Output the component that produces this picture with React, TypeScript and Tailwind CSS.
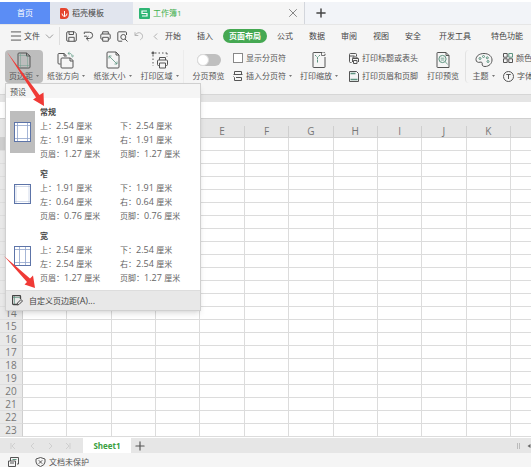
import React, { useState } from 'react';
import { ChevronDown, ChevronLeft, Menu, Plus, X } from 'lucide-react';

type Preset = {
  name: string;
  kind: 'normal' | 'narrow' | 'wide';
  top: string;
  bottom: string;
  left: string;
  right: string;
  header: string;
  footer: string;
};

const presets: Preset[] = [
  { name: '常规', kind: 'normal', top: '2.54', bottom: '2.54', left: '1.91', right: '1.91', header: '1.27', footer: '1.27' },
  { name: '窄', kind: 'narrow', top: '1.91', bottom: '1.91', left: '0.64', right: '0.64', header: '0.76', footer: '0.76' },
  { name: '宽', kind: 'wide', top: '2.54', bottom: '2.54', left: '2.54', right: '2.54', header: '1.27', footer: '1.27' },
];

const menuTabs = ['开始', '插入', '页面布局', '公式', '数据', '审阅', '视图', '安全', '开发工具', '特色功能'];
const columns = ['A', 'B', 'C', 'D', 'E', 'F', 'G', 'H', 'I', 'J', 'K'];
const rows = Array.from({ length: 23 }, (_, i) => i + 1);

function Svg({ className, box, children }: { className: string; box: string; children: React.ReactNode }) {
  return (
    <svg className={`shrink-0 ${className}`} viewBox={box} fill="none" stroke="currentColor" strokeWidth="1" aria-hidden="true">
      {children}
    </svg>
  );
}

function SaveIcon() {
  return (
    <Svg className="h-[11px] w-[11px]" box="0 0 11 11">
      <path d="M2 .7h6.3l2 2V9q0 1.3-1.3 1.3H2Q.7 10.3.7 9V2Q.7.7 2 .7z" />
      <path d="M3 .8v2.700h4.500V.8M2.800 10.200V6.300h5.400v3.900" />
    </Svg>
  );
}

function ExportIcon() {
  return (
    <Svg className="h-[11px] w-[11px]" box="0 0 11 11">
      <path d="M1.300 3V1.200h5.200a3 3 0 0 1 0 6.300H3.500" />
      <path d="M5.500 5.300 3.200 7.500l2.300 2.300M1 5.200h3" />
    </Svg>
  );
}

function PrinterIcon() {
  return (
    <Svg className="h-[11px] w-[11px]" box="0 0 11 11">
      <path d="M2.700 3V.8h5.600V3M2.700 8.200H1.800Q.8 8.200.8 7.200V4q0-1 1-1h7.400q1 0 1 1v3.200q0 1-1 1h-.9" />
      <path d="M2.700 6.300h5.600v3.900H2.700z" />
    </Svg>
  );
}

function PreviewIcon() {
  return (
    <Svg className="h-[11px] w-[11px]" box="0 0 11 11">
      <path d="M9.500 4V1.800q0-1-1-1H1.800q-1 0-1 1v7.400q0 1 1 1h3.400" />
      <circle cx="6.300" cy="6" r="2.500" />
      <path d="m8 8 2.500 2.500" />
    </Svg>
  );
}

function UndoIcon() {
  return (
    <Svg className="h-[10px] w-[10px] text-[#b5b5b5]" box="0 0 10 10">
      <path d="M1 1.200v3.300h3.300M1.200 4.300C2.500 1.800 5 1 7 2.300c2.300 1.700 2 5-.7 6.500" />
    </Svg>
  );
}

function MarginIcon() {
  return (
    <Svg className="h-[17px] w-[14px]" box="0 0 14 17">
      <path d="M2 1h7.500L13 4v11q0 1-1 1H2q-1 0-1-1V2q0-1 1-1z" />
      <path d="M9.500 1v3H13" />
      <path d="M3.500 1v15M10.500 4v12M1 3.500h8.500M1 13.500h12" stroke="#6f9f8c" strokeWidth=".5" />
    </Svg>
  );
}

function OrientationIcon() {
  return (
    <Svg className="h-[18px] w-[18px]" box="0 0 18 18">
      <path d="M3.500 13H2q-1 0-1-1V3.500q0-1 1-1h5l2.500 2.300M7 2.500V5h2.500" />
      <path d="M5 7h8.500L16 9.500V16q0 1-1 1H5q-1 0-1-1V8q0-1 1-1zM13 7v3h3" />
      <path d="M11 2.500q4-.8 4.500 3M12.500.800 11 2.500l1.700 1.400M14 4.500l1.500 1.400L17 4.500" stroke="#6fa390" strokeWidth=".8" />
    </Svg>
  );
}

function SizeIcon() {
  return (
    <Svg className="h-[18px] w-[14px]" box="0 0 14 18">
      <path d="M2 1h8l3 3v12q0 1-1 1H2q-1 0-1-1V2q0-1 1-1z" />
      <path d="M10 1v3h3" />
      <path d="m3 5 8 8M3 7.500V5h2.500M11 10.500V13H8.500" stroke="#5d9480" strokeWidth=".8" />
    </Svg>
  );
}

function AreaIcon() {
  return (
    <Svg className="h-[18px] w-[18px]" box="0 0 18 18">
      <path d="M2 4v11M4 2h12M16 2v4" strokeDasharray="1.500 2" />
      <path d="M.500 2h3M2 .500v3" strokeWidth="1.500" />
      <path d="M8.500 9V6.500h6V9M8.500 14.500h-1q-1 0-1-1V10q0-1 1-1h8q1 0 1 1v3.500q0 1-1 1h-1" />
      <path d="M8.500 12h6v5h-6z" />
    </Svg>
  );
}

function ScaleIcon() {
  return (
    <Svg className="h-[18px] w-[14px]" box="0 0 14 18">
      <path d="M9 1.500H1.500Q1 1.500 1 2v14q0 .5.500.500h11q.5 0 .5-.5V6" />
      <path d="M9 1.500h3.500q.5 0 .5.500v2.500" strokeDasharray="1.500 1" />
      <path d="M3 4 5.500 6.500 8 4M5.500 6.500V12" stroke="#5d9480" strokeDasharray="2 .5" />
      <path d="M9.500 1.500v3H13" strokeWidth=".8" />
    </Svg>
  );
}

function BigPreviewIcon() {
  return (
    <Svg className="h-[18px] w-[14px]" box="0 0 14 18">
      <path d="M1.500 1.500H10l3 3v12H1.500Q1 16.500 1 16V2q0-.5.500-.500z" />
      <path d="M10 1.500v3h3" />
      <circle cx="6.500" cy="8" r="3.600" stroke="#5d9480" />
      <path d="m9.200 10.700 2.500 2.800M4.700 7.200h3.600M4.700 9h3.600" stroke="#5d9480" strokeWidth=".8" />
    </Svg>
  );
}

function PaletteIcon() {
  return (
    <Svg className="h-[16px] w-[18px]" box="0 0 18 16">
      <path d="M9 1.500C4 1.500 1 4.300 1 7.500c0 2.500 2 3.300 4 2.700 1.700-.5 2.500.5 2.200 1.800-.3 1.500.8 2.500 2.800 2.500 4 0 7-3 7-6.500s-3-6.500-8-6.500z" />
      <circle cx="5" cy="6.500" r="1" stroke="#5d9480" />
      <circle cx="8.500" cy="4.500" r="1" stroke="#5d9480" />
      <circle cx="12.300" cy="5.800" r="1" stroke="#5d9480" />
      <circle cx="13" cy="9.500" r="1" stroke="#5d9480" />
    </Svg>
  );
}

function BreakIcon() {
  return (
    <Svg className="h-[10px] w-[10px]" box="0 0 10 10">
      <path d="M1.500 3.500v-3h7v3M.500 3.500h9M1.500 9.500h7v-3H3M1.500 9.500v-3L.500 5.500" />
    </Svg>
  );
}

function TitlePrintIcon() {
  return (
    <Svg className="h-[11px] w-[10px]" box="0 0 10 11">
      <path d="M2.500 9.500h-1q-1 0-1-1v-7q0-1 1-1h5q1 0 1 1V3M.500 3h5" />
      <path d="M4 5.500V4h4v1.500M3.500 9V5.500h6V9M4.500 7.500h3.500v3H4.500z" />
    </Svg>
  );
}

function HeaderFooterIcon() {
  return (
    <Svg className="h-[11px] w-[10px]" box="0 0 10 11">
      <path d="M.500.500h7l2 2v8h-9z" />
      <path d="M1.500 2.500h5M1.500 8.500h7" stroke="#5d9480" strokeWidth="1.500" />
    </Svg>
  );
}

function ColorIcon() {
  return (
    <Svg className="h-[10px] w-[10px]" box="0 0 10 10">
      <path d="M.500.500h3.700v3.700H.500zM.500 5.800h3.700v3.700H.500zM5.800 5.800h3.700v3.700H5.800z" />
      <path d="M5.800.500h3.700v3.700H5.800z" stroke="#5d9480" />
    </Svg>
  );
}

function FontIcon() {
  return (
    <Svg className="h-[11px] w-[11px]" box="0 0 11 11">
      <circle cx="5.500" cy="5.500" r="5" />
      <path d="M3.300 3.500h4.400M5.500 3.500v4.500" />
    </Svg>
  );
}

function PageThumb({ kind }: { kind: Preset['kind'] }) {
  return (
    <svg className="h-[20px] w-[17px]" viewBox="0 0 17 20" fill="none" stroke="#8fa3cb" aria-hidden="true">
      <rect x=".5" y=".5" width="16" height="19" fill="#fff" stroke="#5d74a8" />
      {kind === 'normal' && <path d="M3.500 1v18M13.500 1v18M1 3.500h15M1 16.500h15" strokeWidth=".8" />}
      {kind === 'narrow' && <path d="M2 1v18M15 1v18M1 2.500h15M1 17.500h15" strokeWidth=".4" />}
      {kind === 'wide' && <path d="M5.500 1v18M11.500 1v18M1 3.500h15M1 16.500h15" strokeWidth=".8" />}
    </svg>
  );
}

function Caret() {
  return (
    <svg className="h-[2px] w-[3px] shrink-0" viewBox="0 0 3 2" fill="#777" aria-hidden="true">
      <path d="M0 0h3L1.500 2z" />
    </svg>
  );
}

function BigButton({ icon, label, caret, className }: { icon: React.ReactNode; label: string; caret?: boolean; className: string }) {
  return (
    <button className={`flex h-[33px] shrink-0 flex-col items-center gap-[2px] rounded-sm pt-px ${className}`}>
      <span className="flex h-[18px] items-center">{icon}</span>
      <span className="flex items-center gap-[3px] whitespace-nowrap leading-[10px]">
        {label}
        {caret && <Caret />}
      </span>
    </button>
  );
}

function SmallButton({ icon, label, caret }: { icon: React.ReactNode; label: string; caret?: boolean }) {
  return (
    <button className="flex h-[12px] items-center gap-[3px] whitespace-nowrap">
      {icon}
      {label}
      {caret && <Caret />}
    </button>
  );
}

function TitleTabs() {
  return (
    <div className="flex h-[24px] shrink-0 border-t-2 border-white bg-[#f2f4f8]">
      <button className="w-[50px] shrink-0 bg-[#5b8df5] text-white">首页</button>
      <button className="flex w-[83px] shrink-0 items-center gap-[3px] bg-[#e1e5ee] pl-[10px] text-[#444]">
        <svg className="h-[11px] w-[9px]" viewBox="0 0 9 11" aria-hidden="true">
          <path d="M1 0h3.500Q9 0 9 5.500T4.500 11H1q-1 0-1-1V1q0-1 1-1z" fill="#e5452f" />
          <path d="M4.500 8.500V3M4.500 8.500Q2 8 2 5.500M4.500 8.500Q7 8 7 5.500" stroke="#fff" fill="none" />
        </svg>
        稻壳模板
      </button>
      <div className="flex w-[172px] shrink-0 items-center border-r border-[#d3d6dc] bg-[#f5f5f5] pl-[6px] pr-[4px]">
        <button className="flex flex-1 items-center gap-[3px] text-[#3fae4d]">
          <svg className="h-[11px] w-[11px]" viewBox="0 0 11 11" aria-hidden="true">
            <rect width="11" height="11" rx="1" fill="#2fb574" />
            <path d="M8 3H3v2.500h5V8H3" stroke="#fff" strokeWidth="1.200" fill="none" />
          </svg>
          工作簿1
        </button>
        <button aria-label="关闭" className="text-[#777]"><X size={14} strokeWidth={1.500} /></button>
      </div>
      <button aria-label="新建" className="pl-[9px] text-[#444]"><Plus size={14} strokeWidth={2.500} /></button>
    </div>
  );
}

function MenuBar({ active, onSelect }: { active: string; onSelect: (tab: string) => void }) {
  return (
    <nav className="flex h-[23px] shrink-0 items-center overflow-hidden border-t border-[#e6e6e6] pl-[9px]">
      <button className="flex h-[18px] w-[51px] shrink-0 items-center gap-px border-r border-[#ddd]">
        <Menu size={14} strokeWidth={1.500} />
        文件
        <ChevronDown size={13} strokeWidth={1.500} className="ml-[2px] text-[#888]" />
      </button>
      <div className="flex w-[105px] shrink-0 items-center gap-[6px] pl-[6px] text-[#555]">
        <button aria-label="保存"><SaveIcon /></button>
        <button aria-label="输出"><ExportIcon /></button>
        <button aria-label="打印"><PrinterIcon /></button>
        <button aria-label="打印预览"><PreviewIcon /></button>
        <button aria-label="撤销"><UndoIcon /></button>
        <button aria-label="更多" className="text-[#aaa]"><ChevronLeft size={11} strokeWidth={2} /></button>
      </div>
      <div className="flex shrink-0 items-center gap-[16px]">
        {menuTabs.map(tab => (
          <button
            key={tab}
            onClick={() => onSelect(tab)}
            className={`whitespace-nowrap ${
              tab === active
                ? '-mx-[6px] h-[14px] rounded-full bg-[#45a852] px-[6px] font-bold text-white'
                : tab.length > 2 ? 'mx-[2px]' : ''
            }`}
          >
            {tab}
          </button>
        ))}
      </div>
    </nav>
  );
}

function Ribbon() {
  const [paging, setPaging] = useState(false);

  return (
    <div className="flex h-[47px] shrink-0 items-start overflow-hidden pl-[5px] pt-[3px] text-[#555]">
      <BigButton className="w-[38px] bg-[#bdbdbd]" icon={<MarginIcon />} label="页边距" caret />
      <BigButton className="w-[46px]" icon={<OrientationIcon />} label="纸张方向" caret />
      <BigButton className="w-[47px]" icon={<SizeIcon />} label="纸张大小" caret />
      <BigButton className="w-[47px]" icon={<AreaIcon />} label="打印区域" caret />
      <button
        role="switch"
        aria-checked={paging}
        onClick={() => setPaging(!paging)}
        className="flex h-[33px] w-[50px] shrink-0 flex-col items-center gap-[2px] border-l border-[#ececec] pt-px"
      >
        <span className="flex h-[18px] items-center">
          <span className={`flex h-[12px] w-[24px] items-center rounded-full ${paging ? 'justify-end bg-[#45a852]' : 'bg-[#bfbfbf]'}`}>
            <span className="h-[12px] w-[12px] rounded-full border border-[#ddd] bg-white" />
          </span>
        </span>
        <span className="leading-[10px]">分页预览</span>
      </button>
      <div className="flex w-[64px] shrink-0 flex-col gap-[6px] pt-[2px]">
        <label className="flex h-[12px] items-center gap-[3px] whitespace-nowrap">
          <input type="checkbox" className="h-[10px] w-[10px] appearance-none border border-[#888] bg-white checked:bg-[#45a852]" />
          显示分页符
        </label>
        <SmallButton icon={<BreakIcon />} label="插入分页符" caret />
      </div>
      <BigButton className="w-[44px]" icon={<ScaleIcon />} label="打印缩放" caret />
      <div className="flex w-[80px] shrink-0 flex-col gap-[6px] pl-[8px] pt-[2px]">
        <SmallButton icon={<TitlePrintIcon />} label="打印标题或表头" />
        <SmallButton icon={<HeaderFooterIcon />} label="打印页眉和页脚" />
      </div>
      <BigButton className="w-[44px]" icon={<BigPreviewIcon />} label="打印预览" />
      <BigButton className="w-[36px] border-l border-[#e2e2e2]" icon={<PaletteIcon />} label="主题" caret />
      <div className="flex shrink-0 flex-col gap-[6px] pl-[2px] pt-[2px]">
        <SmallButton icon={<ColorIcon />} label="颜色" />
        <SmallButton icon={<FontIcon />} label="字体" />
      </div>
    </div>
  );
}

function Measure({ label, value }: { label: string; value: string }) {
  return (
    <span className="whitespace-nowrap">
      {label}：<span className="text-[9px] leading-none">{value} </span>厘米
    </span>
  );
}

function MarginMenu() {
  const [selected, setSelected] = useState('常规');

  return (
    <div className="absolute left-[5px] top-[83px] w-[196px] border border-[#d0d0d0] bg-white text-[#666] shadow-md">
      <div className="h-[14px] bg-[#f5f5f5] pl-[4px] leading-[16px] text-[#555]">预设</div>
      <div className="pt-[6px]">
        {presets.map(p => (
          <button key={p.name} onClick={() => setSelected(p.name)} className="flex h-[62px] w-full gap-[5px] pl-[4px] text-left">
            <span className={`mt-[7px] flex h-[42px] w-[25px] items-center justify-center ${p.name === selected ? 'bg-[#bdbdbd]' : ''}`}>
              <PageThumb kind={p.kind} />
            </span>
            <span className="grid flex-1 grid-cols-2 content-start leading-[14px]">
              <span className="col-span-2 font-bold leading-[15px] text-[#444]">{p.name}</span>
              <Measure label="上" value={p.top} />
              <Measure label="下" value={p.bottom} />
              <Measure label="左" value={p.left} />
              <Measure label="右" value={p.right} />
              <Measure label="页眉" value={p.header} />
              <Measure label="页脚" value={p.footer} />
            </span>
          </button>
        ))}
      </div>
      <button className="flex h-[20px] w-full items-center gap-[6px] border-t border-[#ddd] bg-[#e8e8e8] pl-[6px] text-[#444]">
        <Svg className="h-[11px] w-[11px]" box="0 0 11 11">
          <path d="M5 9.500H1.500q-1 0-1-1v-7q0-1 1-1h6q1 0 1 1V4" strokeWidth="1.300" />
          <path d="M2.500 1v8M1 2.500h7" stroke="#5d9480" strokeWidth=".7" />
          <path d="m5 10 .5-2L9 4.500 10.500 6 7 9.500z" />
        </Svg>
        <span>自定义页边距<span className="text-[9px] leading-none">(A)...</span></span>
      </button>
    </div>
  );
}

function Sheet() {
  return (
    <div className="min-h-0 flex-1 overflow-hidden bg-white">
      <table className="w-full table-fixed border-separate border-spacing-0 text-[10px] text-[#777]">
        <colgroup>
          <col className="w-[23px]" />
          {columns.map(c => <col key={c} />)}
          <col className="w-[20px]" />
        </colgroup>
        <thead>
          <tr className="h-[20px] bg-[#e6e6e6]">
            <th className="border-b border-t border-[#d0d0d0] p-0" />
            {columns.map(c => (
              <th key={c} className="border-b border-t border-[#d0d0d0] p-0 align-bottom font-normal">
                <span className="block h-[11px] border-r border-[#cfcfcf] leading-[10px]">{c}</span>
              </th>
            ))}
            <th className="border-b border-t border-[#d0d0d0] p-0" />
          </tr>
        </thead>
        <tbody>
          {rows.map(r => (
            <tr key={r} className="h-[13px]">
              <th className={`border-b border-r border-b-[#dedede] border-r-[#cfcfcf] p-0 font-normal leading-[12px] ${r === 1 ? 'bg-[#cfcfcf]' : 'bg-[#e9e9e9]'}`}>{r}</th>
              {columns.map(c => <td key={c} className="border-b border-r border-[#dcdcdc] p-0" />)}
              <td className="border-b border-[#dcdcdc] p-0" />
            </tr>
          ))}
        </tbody>
      </table>
    </div>
  );
}

function App() {
  const [tab, setTab] = useState('页面布局');

  return (
    <div className="relative flex h-screen flex-col overflow-hidden bg-[#f5f5f5] font-['Open_Sans','Noto_Sans_CJK_SC',sans-serif] text-[8px] leading-[12px] text-[#444]">
      <TitleTabs />
      <MenuBar active={tab} onSelect={setTab} />
      <Ribbon />
      <div className="h-[8px] shrink-0 border-t border-[#d6d6d6] bg-[#e5e5e5]" />
      <div className="h-[16px] shrink-0 bg-white" />
      <Sheet />

      {/* Sheet tabs */}
      <div className="flex h-[15px] shrink-0 items-center bg-[#e6e6e6]">
        <Svg className="h-[8px] w-[83px] text-[#cfcfcf]" box="0 0 83 8">
          <path d="M11 1v6M15 1l-3 3 3 3M34 1l-3 3 3 3M49 1l3 3-3 3M66 1l3 3-3 3M70 1v6" />
        </Svg>
        <button className="h-full w-[48px] bg-white font-bold text-[#3a9f3f]">Sheet1</button>
        <button aria-label="新建工作表" className="pl-[2px] text-[#555]"><Plus size={14} strokeWidth={2} /></button>
        <Svg className="ml-auto h-[10px] w-[16px] text-[#bbb]" box="0 0 16 10">
          <path d="M2.500 2v6M4.500 2v6" />
          <path d="m15.500 3-3 2 3 2z" fill="#666" stroke="none" />
        </Svg>
      </div>

      {/* Status bar */}
      <div className="flex h-[14px] shrink-0 items-end pl-[8px] text-[#555]">
        <Svg className="h-[10px] w-[11px]" box="0 0 11 10">
          <path d="M2.500 4V.500h8V7H9M.500 4h7v5.500h-7zM2 6h4" />
          <path d="M4.500 2.500h4" stroke="#5d9480" />
        </Svg>
        <button className="ml-[16px] flex h-[10px] items-center gap-[3px] leading-[10px]">
          <Svg className="h-[10px] w-[11px]" box="0 0 11 10">
            <path d="M5.500.500 10 2v3q0 3-4.500 4.600Q1 8 1 5V2z" />
            <path d="m3.800 3.300 3.400 3.400M7.200 3.300 3.800 6.700" />
          </Svg>
          文档未保护
        </button>
      </div>

      <MarginMenu />

      {/* Pointer arrows over the margin menu */}
      <svg className="pointer-events-none absolute left-[7px] top-[52px] h-[55px] w-[38px]" viewBox="0 0 38 55" fill="#f03a36" aria-hidden="true">
        <path d="M0 0 32.500 43 36.500 40.500 37 54 26 47.500 29 45.500z" />
      </svg>
      <svg className="pointer-events-none absolute left-[4px] top-[255px] h-[34px] w-[33px]" viewBox="0 0 33 34" fill="#f03a36" aria-hidden="true">
        <path d="M0 1 26 23.500 29 20.500 31 33 20.500 29.500 23 27z" />
      </svg>
    </div>
  );
}

export default App;
